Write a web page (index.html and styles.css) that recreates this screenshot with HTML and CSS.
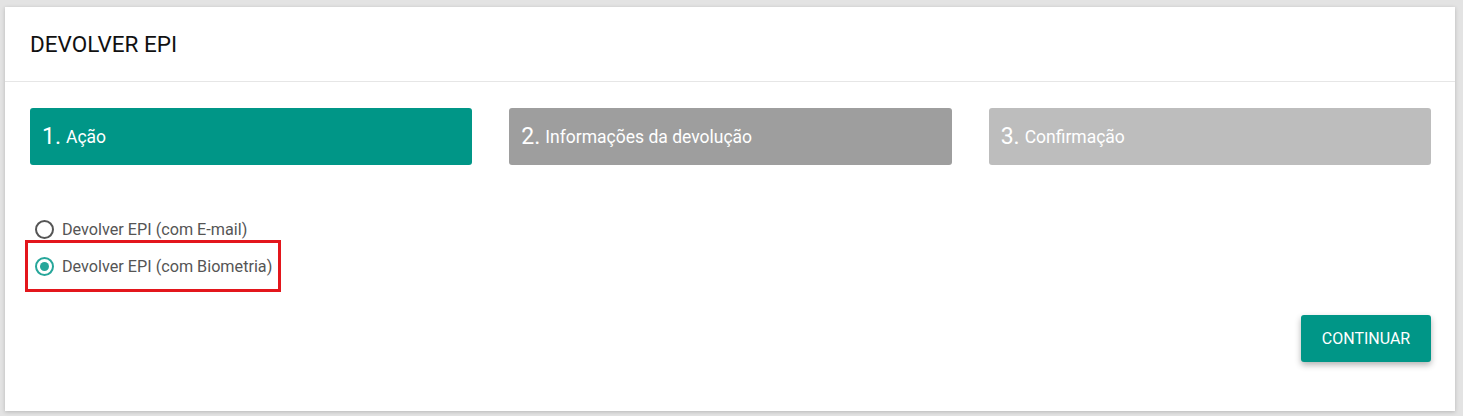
FILE: index.html
```html
<!DOCTYPE html>
<html lang="pt">
<head>
<meta charset="UTF-8">
<title>Devolver EPI</title>
<link rel="stylesheet" href="styles.css">
</head>
<body>

<div class="card">
    <div class="card-header">DEVOLVER EPI</div>

    <div class="card-body">
        <div class="steps">
            <div class="step active"><span class="num">1.</span> Ação</div>
            <div class="step done"><span class="num">2.</span> Informações da devolução</div>
            <div class="step todo"><span class="num">3.</span> Confirmação</div>
        </div>

        <div class="options">
            <label class="radio">
                <input type="radio" name="acao">
                <span class="dot"></span>
                Devolver EPI (com E-mail)
            </label>
            <label class="radio highlight">
                <input type="radio" name="acao" checked>
                <span class="dot"></span>
                Devolver EPI (com Biometria)
            </label>
        </div>

        <div class="actions">
            <button class="btn">CONTINUAR</button>
        </div>
    </div>
</div>

</body>
</html>
```

FILE: styles.css
```css
body {
    margin: 0;
    padding: 7px 8px 5px 5px;
    background: #e3e3e3;
    font-family: Roboto, "Liberation Sans", sans-serif;
    color: #333;
}
.card {
    background: #fff;
    box-shadow: 0 1px 4px rgba(0,0,0,0.2);
    height: 404px;
    box-sizing: border-box;
}
.card-header {
    padding: 0 25px;
    height: 74px;
    line-height: 74px;
    font-size: 22.5px;
    color: #111;
    border-bottom: 1px solid #e6e6e6;
}
.card-body {
    padding: 26px 24px 0 25px;
}
.steps {
    display: flex;
    gap: 37px;
}
.step {
    flex: 1;
    height: 57px;
    border-radius: 3px;
    display: flex;
    align-items: center;
    padding-left: 12px;
    color: #fff;
    font-size: 17.5px;
}
.step .num {
    font-size: 23px;
    margin-right: 5px;
}
.step.active { background: #009687; }
.step.done { background: #9e9e9e; }
.step.todo { background: #bdbdbd; }
.options {
    margin-top: 53px;
    display: flex;
    flex-direction: column;
    align-items: flex-start;
}
.radio {
    display: flex;
    align-items: center;
    font-size: 16.2px;
    color: #555;
    height: 22px;
    padding: 0 4px 0 5px;
    cursor: pointer;
}
.radio input {
    display: none;
}
.radio .dot {
    width: 15px;
    height: 15px;
    border: 2px solid #555;
    border-radius: 50%;
    margin-right: 8px;
    position: relative;
}
.radio input:checked + .dot {
    border-color: #26a69a;
}
.radio input:checked + .dot::after {
    content: "";
    position: absolute;
    left: 3px;
    top: 3px;
    width: 9px;
    height: 9px;
    border-radius: 50%;
    background: #26a69a;
}
.radio.highlight {
    margin-left: -5px;
    border: 3px solid #e3161c;
    height: 46px;
    padding: 0 6px 0 7px;
}
.actions {
    display: flex;
    justify-content: flex-end;
    margin-top: 23px;
}
.btn {
    width: 130px;
    height: 47px;
    background: #009687;
    color: #fff;
    border: none;
    border-radius: 3px;
    font-family: Roboto, "Liberation Sans", sans-serif;
    font-size: 16px;
    font-weight: 400;
    box-shadow: 0 3px 6px rgba(0,0,0,0.3);
    cursor: pointer;
}
```
